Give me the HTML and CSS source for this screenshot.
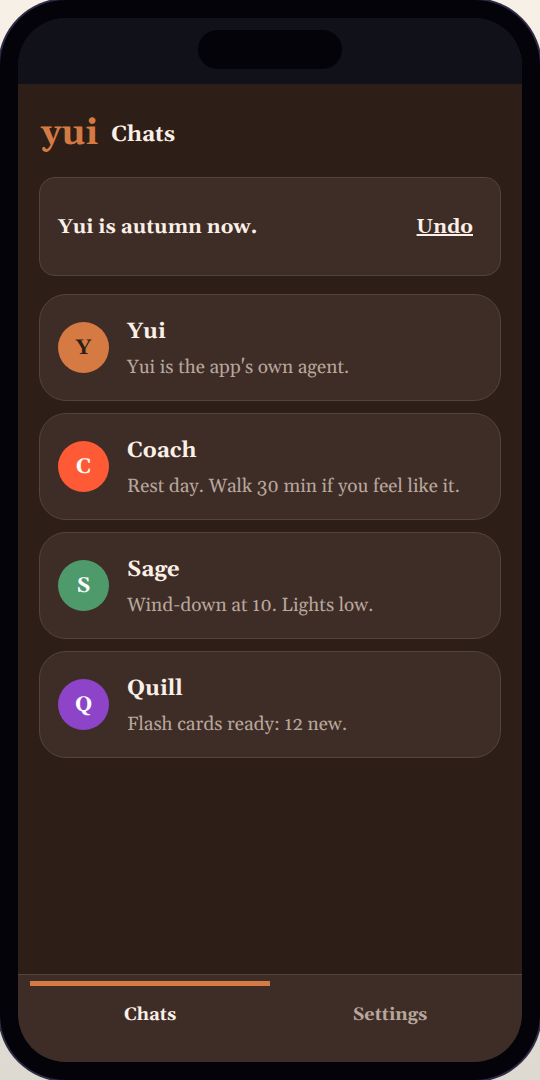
FILE: index.html
```
<!DOCTYPE html>
<html lang="en">
	<head>
		<meta charset="UTF-8" />
		<meta name="viewport" content="width=device-width, initial-scale=1.0" />
		<title>Yui - Chats</title>
		<link rel="stylesheet" href="styles.css">
	</head>
	<body>
		<div class="phone">
			<div class="screen">
				<div class="status">
					<div class="island"></div>
				</div>
				<main class="content">
					<header class="header">
						<span class="logo">yui</span>
						<h1>Chats</h1>
					</header>
					<div class="notice" role="status">
						<p>Yui is autumn now.</p>
						<button type="button" class="undo">Undo</button>
					</div>
					<ul class="chats">
						<li>
							<a class="chat" href="#yui">
								<span class="avatar yui">Y</span>
								<span class="text">
									<strong>Yui</strong>
									<span class="last">Yui is the app's own agent.</span>
								</span>
							</a>
						</li>
						<li>
							<a class="chat" href="#coach">
								<span class="avatar coach">C</span>
								<span class="text">
									<strong>Coach</strong>
									<span class="last">Rest day. Walk 30 min if you feel like it.</span>
								</span>
							</a>
						</li>
						<li>
							<a class="chat" href="#sage">
								<span class="avatar sage">S</span>
								<span class="text">
									<strong>Sage</strong>
									<span class="last">Wind-down at 10. Lights low.</span>
								</span>
							</a>
						</li>
						<li>
							<a class="chat" href="#quill">
								<span class="avatar quill">Q</span>
								<span class="text">
									<strong>Quill</strong>
									<span class="last">Flash cards ready: 12 new.</span>
								</span>
							</a>
						</li>
					</ul>
				</main>
				<nav class="tabs">
					<a class="tab current" href="#chats" aria-current="page">Chats</a>
					<a class="tab" href="#settings">Settings</a>
				</nav>
			</div>
		</div>
	</body>
</html>
```
FILE: styles.css
```
* {
	margin: 0;
	padding: 0;
	box-sizing: border-box;
	list-style: none;
}
body {
	background: linear-gradient(#f7f0e6, #dedad2);
	font-family: Gelasio, Georgia, "Liberation Serif", serif;
	text-rendering: geometricPrecision;
	color: #fbefe6;
}
a {
	color: inherit;
	text-decoration: none;
}
.phone {
	display: flex;
	min-height: 100vh;
	padding: 18px;
	background: #040309;
	border-radius: 66px;
	/* thin metal rim */
	box-shadow: 0 0 0 2px #2f2c48;
}
.screen {
	flex: 1;
	display: flex;
	flex-direction: column;
	overflow: hidden;
	border-radius: 48px;
	background: #2d1f18;
}
.status {
	display: flex;
	justify-content: center;
	height: 66px;
	padding-top: 12px;
	background: #101119;
}
.island {
	width: 144px;
	height: 39px;
	border-radius: 20px;
	background: #040309;
}
.content {
	flex: 1;
	padding: 24px 21px;
}
.header {
	display: flex;
	align-items: center;
	gap: 13px;
	height: 51px;
	padding: 3px 0 0 2px;
	margin-bottom: 18px;
}
.logo {
	font-size: 36px;
	line-height: 48px;
	font-weight: bold;
	color: #d67a43;
}
.header h1 {
	font-size: 22px;
	line-height: 30px;
}
.notice {
	display: flex;
	align-items: center;
	justify-content: space-between;
	height: 99px;
	padding: 0 27px 0 18px;
	margin-bottom: 18px;
	border: 1px solid #54443a;
	border-radius: 16px;
	background: #3d2d26;
	font-size: 20px;
	font-weight: bold;
}
.undo {
	border: 0;
	background: none;
	color: inherit;
	font: inherit;
	text-decoration: underline;
}
.chats {
	display: grid;
	gap: 12px;
}
.chat {
	display: flex;
	align-items: center;
	gap: 18px;
	min-height: 107px;
	padding: 12px 18px;
	border: 1px solid #54443a;
	border-radius: 27px;
	background: #3d2d26;
}
.avatar {
	display: flex;
	align-items: center;
	justify-content: center;
	width: 51px;
	height: 51px;
	padding-top: 2px;
	border-radius: 50%;
	font-size: 21px;
	font-weight: bold;
	color: #fff;
}
.avatar.yui {
	background: #d67a43;
	color: #2d1f18;
}
.avatar.coach {
	background: #ff5a36;
}
.avatar.sage {
	background: #4f9a6b;
}
.avatar.quill {
	background: #8e44c9;
}
.text {
	padding-top: 5px;
}
.text strong,
.text .last {
	display: block;
}
.text strong {
	font-size: 22px;
	line-height: 36px;
}
.text .last {
	font-size: 19px;
	line-height: 36px;
	color: #b9a69c;
}
.tabs {
	display: flex;
	height: 88px;
	padding: 6px 12px 0;
	border-top: 1px solid #54443a;
	background: #3d2d26;
}
.tab {
	flex: 1;
	padding-top: 18px;
	border-top: 5px solid transparent;
	font-size: 18px;
	line-height: 24px;
	font-weight: bold;
	text-align: center;
	color: #b9a69c;
}
.tab.current {
	border-top-color: #d67a43;
	color: #fbefe6;
}
```
